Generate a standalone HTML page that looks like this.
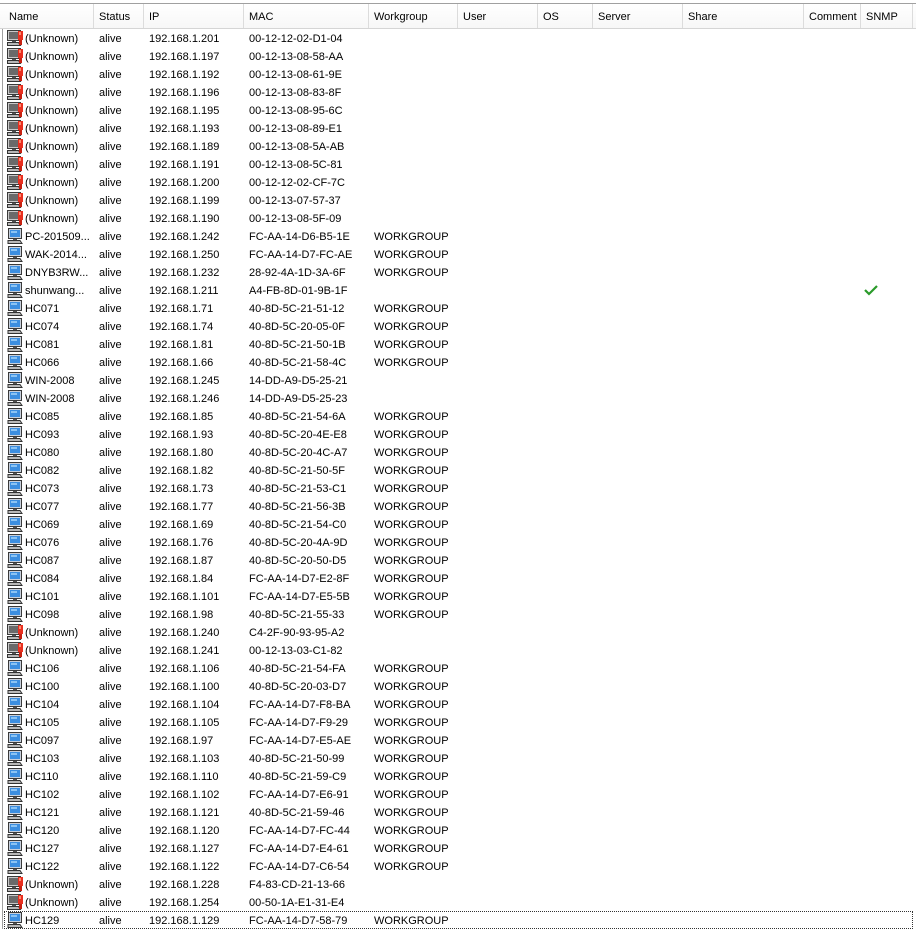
<!DOCTYPE html>
<html><head><meta charset="utf-8"><style>
body{margin:0;background:#fff;width:916px;height:929px;overflow:hidden;position:relative;font-family:"Liberation Sans",Tahoma,sans-serif;font-size:11px;color:#000}
#hdr{position:absolute;left:0;top:3px;width:916px;height:24px;border-top:1px solid #a0a0a0;border-bottom:1px solid #d5d5d5;background:linear-gradient(#fff,#f7f7f7)}
#hdr div{position:absolute;top:0;height:24px;line-height:27px;padding-left:6px;box-sizing:border-box;border-right:1px solid #dcdcdc}
#lb{position:absolute;left:2px;top:29px;width:1px;height:900px;background:#a0a0a0}
table{position:absolute;left:3px;top:30px;border-collapse:collapse;table-layout:fixed}
td{height:18px;padding:0 0 0 6px;white-space:nowrap;overflow:hidden;line-height:18px}
td.n{padding-left:4px}
td.n svg{vertical-align:-4px;margin-right:2px}
#focus{position:absolute;left:4px;top:911px;width:907px;height:16px;border:1px dotted #333}
</style></head><body>
<svg width="0" height="0" style="position:absolute">
<defs>
<symbol id="pc" viewBox="0 0 16 16">
<rect x="1.5" y="0.5" width="13" height="10" fill="#c8d0dc" stroke="#3a3a3a"/>
<rect x="3" y="2" width="10" height="7" fill="#3c8ee0"/>
<rect x="4" y="3" width="6" height="2" fill="#8cc4f4"/>
<rect x="6" y="11" width="4" height="1" fill="#555"/>
<path d="M1 12.5h12l2 3H1z" fill="#b8b8b8" stroke="#333"/>
</symbol>
<symbol id="un" viewBox="0 0 16 16">
<rect x="0.5" y="0.5" width="13" height="10" fill="#c8c8c8" stroke="#3a3a3a"/>
<rect x="2" y="2" width="10" height="7" fill="#6a6a6a"/>
<rect x="5" y="11" width="4" height="1" fill="#555"/>
<path d="M0.5 12.5h11l2 3H0.5z" fill="#b8b8b8" stroke="#333"/>
<path d="M11 1h5v9h-5z" fill="#e83020"/>
<path d="M12 10h3v5h-3z" fill="#c82010"/>
<path d="M12 2h2v3h-2z" fill="#ff8a70"/>
</symbol>
</defs></svg>
<div id="hdr">
<div style="left:3px;width:91px">Name</div>
<div style="left:93px;width:51px">Status</div>
<div style="left:143px;width:101px">IP</div>
<div style="left:243px;width:126px">MAC</div>
<div style="left:368px;width:90px">Workgroup</div>
<div style="left:457px;width:81px">User</div>
<div style="left:537px;width:56px">OS</div>
<div style="left:592px;width:91px">Server</div>
<div style="left:682px;width:122px">Share</div>
<div style="left:803px;width:58px">Comment</div>
<div style="left:860px;width:53px">SNMP</div>
</div>
<div id="lb"></div>
<table>
<colgroup><col style="width:90px"><col style="width:50px"><col style="width:100px"><col style="width:125px"><col style="width:89px"><col style="width:80px"><col style="width:55px"><col style="width:90px"><col style="width:121px"><col style="width:57px"><col style="width:52px"></colgroup>
<tr><td class="n"><svg width="16" height="16"><use href="#un"/></svg>(Unknown)</td><td>alive</td><td>192.168.1.201</td><td>00-12-12-02-D1-04</td><td></td><td></td><td></td><td></td><td></td><td></td><td></td></tr>
<tr><td class="n"><svg width="16" height="16"><use href="#un"/></svg>(Unknown)</td><td>alive</td><td>192.168.1.197</td><td>00-12-13-08-58-AA</td><td></td><td></td><td></td><td></td><td></td><td></td><td></td></tr>
<tr><td class="n"><svg width="16" height="16"><use href="#un"/></svg>(Unknown)</td><td>alive</td><td>192.168.1.192</td><td>00-12-13-08-61-9E</td><td></td><td></td><td></td><td></td><td></td><td></td><td></td></tr>
<tr><td class="n"><svg width="16" height="16"><use href="#un"/></svg>(Unknown)</td><td>alive</td><td>192.168.1.196</td><td>00-12-13-08-83-8F</td><td></td><td></td><td></td><td></td><td></td><td></td><td></td></tr>
<tr><td class="n"><svg width="16" height="16"><use href="#un"/></svg>(Unknown)</td><td>alive</td><td>192.168.1.195</td><td>00-12-13-08-95-6C</td><td></td><td></td><td></td><td></td><td></td><td></td><td></td></tr>
<tr><td class="n"><svg width="16" height="16"><use href="#un"/></svg>(Unknown)</td><td>alive</td><td>192.168.1.193</td><td>00-12-13-08-89-E1</td><td></td><td></td><td></td><td></td><td></td><td></td><td></td></tr>
<tr><td class="n"><svg width="16" height="16"><use href="#un"/></svg>(Unknown)</td><td>alive</td><td>192.168.1.189</td><td>00-12-13-08-5A-AB</td><td></td><td></td><td></td><td></td><td></td><td></td><td></td></tr>
<tr><td class="n"><svg width="16" height="16"><use href="#un"/></svg>(Unknown)</td><td>alive</td><td>192.168.1.191</td><td>00-12-13-08-5C-81</td><td></td><td></td><td></td><td></td><td></td><td></td><td></td></tr>
<tr><td class="n"><svg width="16" height="16"><use href="#un"/></svg>(Unknown)</td><td>alive</td><td>192.168.1.200</td><td>00-12-12-02-CF-7C</td><td></td><td></td><td></td><td></td><td></td><td></td><td></td></tr>
<tr><td class="n"><svg width="16" height="16"><use href="#un"/></svg>(Unknown)</td><td>alive</td><td>192.168.1.199</td><td>00-12-13-07-57-37</td><td></td><td></td><td></td><td></td><td></td><td></td><td></td></tr>
<tr><td class="n"><svg width="16" height="16"><use href="#un"/></svg>(Unknown)</td><td>alive</td><td>192.168.1.190</td><td>00-12-13-08-5F-09</td><td></td><td></td><td></td><td></td><td></td><td></td><td></td></tr>
<tr><td class="n"><svg width="16" height="16"><use href="#pc"/></svg>PC-201509...</td><td>alive</td><td>192.168.1.242</td><td>FC-AA-14-D6-B5-1E</td><td>WORKGROUP</td><td></td><td></td><td></td><td></td><td></td><td></td></tr>
<tr><td class="n"><svg width="16" height="16"><use href="#pc"/></svg>WAK-2014...</td><td>alive</td><td>192.168.1.250</td><td>FC-AA-14-D7-FC-AE</td><td>WORKGROUP</td><td></td><td></td><td></td><td></td><td></td><td></td></tr>
<tr><td class="n"><svg width="16" height="16"><use href="#pc"/></svg>DNYB3RW...</td><td>alive</td><td>192.168.1.232</td><td>28-92-4A-1D-3A-6F</td><td>WORKGROUP</td><td></td><td></td><td></td><td></td><td></td><td></td></tr>
<tr><td class="n"><svg width="16" height="16"><use href="#pc"/></svg>shunwang...</td><td>alive</td><td>192.168.1.211</td><td>A4-FB-8D-01-9B-1F</td><td></td><td></td><td></td><td></td><td></td><td></td><td style="padding-left:4px"><svg width="14" height="12" viewBox="0 0 14 12" style="vertical-align:-2px"><path d="M1 6l4 4 8-8" fill="none" stroke="#2a9a2a" stroke-width="2.2"/></svg></td></tr>
<tr><td class="n"><svg width="16" height="16"><use href="#pc"/></svg>HC071</td><td>alive</td><td>192.168.1.71</td><td>40-8D-5C-21-51-12</td><td>WORKGROUP</td><td></td><td></td><td></td><td></td><td></td><td></td></tr>
<tr><td class="n"><svg width="16" height="16"><use href="#pc"/></svg>HC074</td><td>alive</td><td>192.168.1.74</td><td>40-8D-5C-20-05-0F</td><td>WORKGROUP</td><td></td><td></td><td></td><td></td><td></td><td></td></tr>
<tr><td class="n"><svg width="16" height="16"><use href="#pc"/></svg>HC081</td><td>alive</td><td>192.168.1.81</td><td>40-8D-5C-21-50-1B</td><td>WORKGROUP</td><td></td><td></td><td></td><td></td><td></td><td></td></tr>
<tr><td class="n"><svg width="16" height="16"><use href="#pc"/></svg>HC066</td><td>alive</td><td>192.168.1.66</td><td>40-8D-5C-21-58-4C</td><td>WORKGROUP</td><td></td><td></td><td></td><td></td><td></td><td></td></tr>
<tr><td class="n"><svg width="16" height="16"><use href="#pc"/></svg>WIN-2008</td><td>alive</td><td>192.168.1.245</td><td>14-DD-A9-D5-25-21</td><td></td><td></td><td></td><td></td><td></td><td></td><td></td></tr>
<tr><td class="n"><svg width="16" height="16"><use href="#pc"/></svg>WIN-2008</td><td>alive</td><td>192.168.1.246</td><td>14-DD-A9-D5-25-23</td><td></td><td></td><td></td><td></td><td></td><td></td><td></td></tr>
<tr><td class="n"><svg width="16" height="16"><use href="#pc"/></svg>HC085</td><td>alive</td><td>192.168.1.85</td><td>40-8D-5C-21-54-6A</td><td>WORKGROUP</td><td></td><td></td><td></td><td></td><td></td><td></td></tr>
<tr><td class="n"><svg width="16" height="16"><use href="#pc"/></svg>HC093</td><td>alive</td><td>192.168.1.93</td><td>40-8D-5C-20-4E-E8</td><td>WORKGROUP</td><td></td><td></td><td></td><td></td><td></td><td></td></tr>
<tr><td class="n"><svg width="16" height="16"><use href="#pc"/></svg>HC080</td><td>alive</td><td>192.168.1.80</td><td>40-8D-5C-20-4C-A7</td><td>WORKGROUP</td><td></td><td></td><td></td><td></td><td></td><td></td></tr>
<tr><td class="n"><svg width="16" height="16"><use href="#pc"/></svg>HC082</td><td>alive</td><td>192.168.1.82</td><td>40-8D-5C-21-50-5F</td><td>WORKGROUP</td><td></td><td></td><td></td><td></td><td></td><td></td></tr>
<tr><td class="n"><svg width="16" height="16"><use href="#pc"/></svg>HC073</td><td>alive</td><td>192.168.1.73</td><td>40-8D-5C-21-53-C1</td><td>WORKGROUP</td><td></td><td></td><td></td><td></td><td></td><td></td></tr>
<tr><td class="n"><svg width="16" height="16"><use href="#pc"/></svg>HC077</td><td>alive</td><td>192.168.1.77</td><td>40-8D-5C-21-56-3B</td><td>WORKGROUP</td><td></td><td></td><td></td><td></td><td></td><td></td></tr>
<tr><td class="n"><svg width="16" height="16"><use href="#pc"/></svg>HC069</td><td>alive</td><td>192.168.1.69</td><td>40-8D-5C-21-54-C0</td><td>WORKGROUP</td><td></td><td></td><td></td><td></td><td></td><td></td></tr>
<tr><td class="n"><svg width="16" height="16"><use href="#pc"/></svg>HC076</td><td>alive</td><td>192.168.1.76</td><td>40-8D-5C-20-4A-9D</td><td>WORKGROUP</td><td></td><td></td><td></td><td></td><td></td><td></td></tr>
<tr><td class="n"><svg width="16" height="16"><use href="#pc"/></svg>HC087</td><td>alive</td><td>192.168.1.87</td><td>40-8D-5C-20-50-D5</td><td>WORKGROUP</td><td></td><td></td><td></td><td></td><td></td><td></td></tr>
<tr><td class="n"><svg width="16" height="16"><use href="#pc"/></svg>HC084</td><td>alive</td><td>192.168.1.84</td><td>FC-AA-14-D7-E2-8F</td><td>WORKGROUP</td><td></td><td></td><td></td><td></td><td></td><td></td></tr>
<tr><td class="n"><svg width="16" height="16"><use href="#pc"/></svg>HC101</td><td>alive</td><td>192.168.1.101</td><td>FC-AA-14-D7-E5-5B</td><td>WORKGROUP</td><td></td><td></td><td></td><td></td><td></td><td></td></tr>
<tr><td class="n"><svg width="16" height="16"><use href="#pc"/></svg>HC098</td><td>alive</td><td>192.168.1.98</td><td>40-8D-5C-21-55-33</td><td>WORKGROUP</td><td></td><td></td><td></td><td></td><td></td><td></td></tr>
<tr><td class="n"><svg width="16" height="16"><use href="#un"/></svg>(Unknown)</td><td>alive</td><td>192.168.1.240</td><td>C4-2F-90-93-95-A2</td><td></td><td></td><td></td><td></td><td></td><td></td><td></td></tr>
<tr><td class="n"><svg width="16" height="16"><use href="#un"/></svg>(Unknown)</td><td>alive</td><td>192.168.1.241</td><td>00-12-13-03-C1-82</td><td></td><td></td><td></td><td></td><td></td><td></td><td></td></tr>
<tr><td class="n"><svg width="16" height="16"><use href="#pc"/></svg>HC106</td><td>alive</td><td>192.168.1.106</td><td>40-8D-5C-21-54-FA</td><td>WORKGROUP</td><td></td><td></td><td></td><td></td><td></td><td></td></tr>
<tr><td class="n"><svg width="16" height="16"><use href="#pc"/></svg>HC100</td><td>alive</td><td>192.168.1.100</td><td>40-8D-5C-20-03-D7</td><td>WORKGROUP</td><td></td><td></td><td></td><td></td><td></td><td></td></tr>
<tr><td class="n"><svg width="16" height="16"><use href="#pc"/></svg>HC104</td><td>alive</td><td>192.168.1.104</td><td>FC-AA-14-D7-F8-BA</td><td>WORKGROUP</td><td></td><td></td><td></td><td></td><td></td><td></td></tr>
<tr><td class="n"><svg width="16" height="16"><use href="#pc"/></svg>HC105</td><td>alive</td><td>192.168.1.105</td><td>FC-AA-14-D7-F9-29</td><td>WORKGROUP</td><td></td><td></td><td></td><td></td><td></td><td></td></tr>
<tr><td class="n"><svg width="16" height="16"><use href="#pc"/></svg>HC097</td><td>alive</td><td>192.168.1.97</td><td>FC-AA-14-D7-E5-AE</td><td>WORKGROUP</td><td></td><td></td><td></td><td></td><td></td><td></td></tr>
<tr><td class="n"><svg width="16" height="16"><use href="#pc"/></svg>HC103</td><td>alive</td><td>192.168.1.103</td><td>40-8D-5C-21-50-99</td><td>WORKGROUP</td><td></td><td></td><td></td><td></td><td></td><td></td></tr>
<tr><td class="n"><svg width="16" height="16"><use href="#pc"/></svg>HC110</td><td>alive</td><td>192.168.1.110</td><td>40-8D-5C-21-59-C9</td><td>WORKGROUP</td><td></td><td></td><td></td><td></td><td></td><td></td></tr>
<tr><td class="n"><svg width="16" height="16"><use href="#pc"/></svg>HC102</td><td>alive</td><td>192.168.1.102</td><td>FC-AA-14-D7-E6-91</td><td>WORKGROUP</td><td></td><td></td><td></td><td></td><td></td><td></td></tr>
<tr><td class="n"><svg width="16" height="16"><use href="#pc"/></svg>HC121</td><td>alive</td><td>192.168.1.121</td><td>40-8D-5C-21-59-46</td><td>WORKGROUP</td><td></td><td></td><td></td><td></td><td></td><td></td></tr>
<tr><td class="n"><svg width="16" height="16"><use href="#pc"/></svg>HC120</td><td>alive</td><td>192.168.1.120</td><td>FC-AA-14-D7-FC-44</td><td>WORKGROUP</td><td></td><td></td><td></td><td></td><td></td><td></td></tr>
<tr><td class="n"><svg width="16" height="16"><use href="#pc"/></svg>HC127</td><td>alive</td><td>192.168.1.127</td><td>FC-AA-14-D7-E4-61</td><td>WORKGROUP</td><td></td><td></td><td></td><td></td><td></td><td></td></tr>
<tr><td class="n"><svg width="16" height="16"><use href="#pc"/></svg>HC122</td><td>alive</td><td>192.168.1.122</td><td>FC-AA-14-D7-C6-54</td><td>WORKGROUP</td><td></td><td></td><td></td><td></td><td></td><td></td></tr>
<tr><td class="n"><svg width="16" height="16"><use href="#un"/></svg>(Unknown)</td><td>alive</td><td>192.168.1.228</td><td>F4-83-CD-21-13-66</td><td></td><td></td><td></td><td></td><td></td><td></td><td></td></tr>
<tr><td class="n"><svg width="16" height="16"><use href="#un"/></svg>(Unknown)</td><td>alive</td><td>192.168.1.254</td><td>00-50-1A-E1-31-E4</td><td></td><td></td><td></td><td></td><td></td><td></td><td></td></tr>
<tr><td class="n"><svg width="16" height="16"><use href="#pc"/></svg>HC129</td><td>alive</td><td>192.168.1.129</td><td>FC-AA-14-D7-58-79</td><td>WORKGROUP</td><td></td><td></td><td></td><td></td><td></td><td></td></tr>
</table>
<div id="focus"></div>
</body></html>
